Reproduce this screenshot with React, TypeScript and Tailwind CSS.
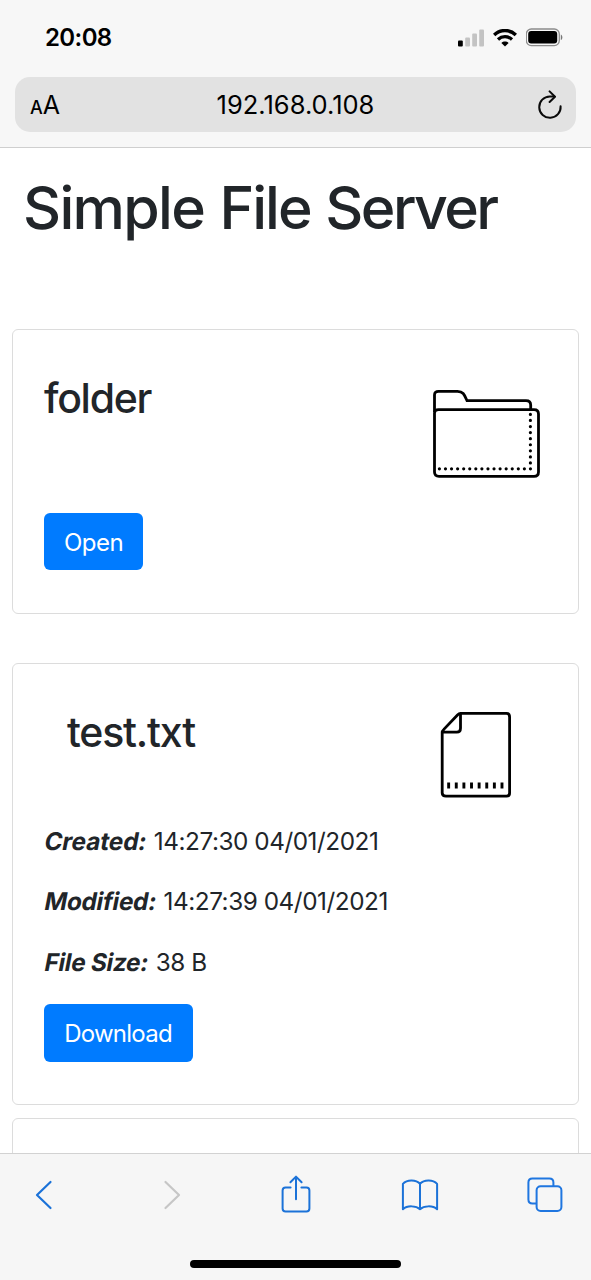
import type { ReactNode } from "react";

function SignalIcon() {
  return (
    <svg width="26" height="18" viewBox="0 0 26 18">
      <rect x="0" y="11.5" width="4.8" height="6" rx="1" fill="#000" />
      <rect x="7.2" y="8.5" width="4.8" height="9" rx="1" fill="#c3c3c3" />
      <rect x="14.2" y="4.5" width="4.8" height="13" rx="1" fill="#c3c3c3" />
      <rect x="21.2" y="0.5" width="4.8" height="17" rx="1" fill="#c3c3c3" />
    </svg>
  );
}

function WifiIcon() {
  return (
    <svg width="24" height="18" viewBox="0 0 24 18" fill="none" stroke="#000">
      <path d="M1.1 6C7.2 .1 16.8 .1 22.9 6" strokeWidth="3.5" />
      <path d="M5 10.4C9 6.8 15 6.8 19 10.4" strokeWidth="3.3" />
      <path d="M12 17.6L8.4 13.9C10.4 12.1 13.6 12.1 15.6 13.9Z" fill="#000" stroke="none" />
    </svg>
  );
}

function BatteryIcon() {
  return (
    <svg width="38" height="19" viewBox="0 0 38 19">
      <rect x="0.3" y="1" width="33" height="16.6" rx="5" fill="none" stroke="#8c8c8c" strokeWidth="1.3" />
      <rect x="2.2" y="3" width="29" height="12.6" rx="3" fill="#000" />
      <path d="M34.8 6.5C36.9 7.4 36.9 11.2 34.8 12.1Z" fill="#777" />
    </svg>
  );
}

function ReloadIcon() {
  return (
    <svg width="25" height="30" viewBox="0 0 25 30" fill="none" stroke="#0a0a0a" strokeWidth="2" strokeLinecap="round" strokeLinejoin="round">
      <path d="M22.6 16.3A10.7 10.7 0 1 1 11.9 6.4H16.4" />
      <path d="M11.6 1.4L17 6.7L11.6 12" />
    </svg>
  );
}

function FolderIcon() {
  return (
    <svg width="108" height="90" viewBox="0 0 108 90" fill="none" stroke="#000" strokeWidth="2.8" strokeLinejoin="round">
      <path d="M2.5 23V6Q2.5 2.3 6.5 2.3H25.5C31.5 2.3 32.5 6 35 11.7H94Q98.7 11.7 98.7 16V20.5" />
      <path d="M2.5 24Q2.5 20.6 6.5 20.6H102Q106.5 20.6 106.5 25V83Q106.5 87.4 102 87.4H7Q2.5 87.4 2.5 83Z" />
      <path d="M7.4 79.8H99" strokeWidth="3.2" strokeDasharray="0 6.07" strokeLinecap="round" />
      <path d="M98.4 25.4V75" strokeWidth="3.2" strokeDasharray="0 6.07" strokeLinecap="round" />
    </svg>
  );
}

function FileIcon() {
  return (
    <svg width="72" height="88" viewBox="0 0 72 88" fill="none" stroke="#000" strokeWidth="2.8" strokeLinejoin="round">
      <path d="M20.5 2.4H66.5Q69.6 2.4 69.6 6V82Q69.6 85.2 66.5 85.2H6Q2.2 85.2 2.2 82V21.5Q2.2 20 3.8 18.4L17.5 4Q19 2.4 20.5 2.4Z" />
      <path d="M20.5 2.6V17.3Q20.5 21.2 16.8 21.2H2.4" />
      <path d="M7.2 74.5H64" strokeWidth="6" strokeDasharray="2.9 4.72" />
    </svg>
  );
}

function ShareIcon() {
  return (
    <svg width="30" height="40" viewBox="0 0 30 40" fill="none" stroke="#1b72d8" strokeWidth="2" strokeLinecap="round" strokeLinejoin="round">
      <path d="M9.6 12.4H4.6Q1.6 12.4 1.6 15.4V33.5Q1.6 36.5 4.6 36.5H25.4Q28.4 36.5 28.4 33.5V15.4Q28.4 12.4 25.4 12.4H20.4" />
      <path d="M15 24.2V1.7M9.4 7.2L15 1.6L20.6 7.2" />
    </svg>
  );
}

function BookIcon() {
  return (
    <svg width="38" height="34" viewBox="0 0 38 34" fill="none" stroke="#1b72d8" strokeWidth="2" strokeLinecap="round" strokeLinejoin="round">
      <path d="M19 4.9C15.2 .7 6.2 .2 1.9 4.9V30.3C6.2 26.2 15.2 26.6 19 30.3C22.8 26.6 31.8 26.2 36.1 30.3V4.9C31.8 .2 22.8 .7 19 4.9ZM19 4.9V30.3" />
    </svg>
  );
}

function TabsIcon() {
  return (
    <svg width="36" height="36" viewBox="0 0 36 36" fill="none" stroke="#1f76e0" strokeWidth="2">
      <path d="M9.6 26.4H5.4Q1.4 26.4 1.4 22.4V5.6Q1.4 1.6 5.4 1.6H22.4Q26.4 1.6 26.4 5.6V9" />
      <rect x="9.6" y="9.2" width="24.8" height="24.8" rx="4" />
    </svg>
  );
}

function Card({ className, children }: { className: string; children?: ReactNode }) {
  return (
    <section className={`mx-3 flex shrink-0 flex-col items-start rounded-[6px] border-[1.5px] border-[#dcdcdc] bg-white pl-[31px] ${className}`}>
      {children}
    </section>
  );
}

function ActionButton({ label, className }: { label: string; className: string }) {
  return (
    <button className={`flex shrink-0 items-center justify-center rounded-[6px] bg-[#007bff] text-[24px] text-white ${className}`}>
      {label}
    </button>
  );
}

function Detail({ label, value, className }: { label: string; value: string; className: string }) {
  return (
    <p className="h-[60.6px] pt-[0.6px] whitespace-nowrap text-[24.3px] leading-[36px]">
      <span className={`ml-px inline-block -skew-x-[11deg] font-bold ${className}`}>{label}</span>
      <span className="ml-[7px] tracking-[-0.45px]">{value}</span>
    </p>
  );
}

export default function App() {
  return (
    <div className="flex h-[1280px] w-[591px] flex-col overflow-hidden bg-white font-['Inter','Liberation_Sans',sans-serif] text-[#212529]">
      <header className="flex h-[148px] shrink-0 flex-col border-b border-[#cfcfcf] bg-[#f7f7f7] text-black">
        <div className="flex h-[77px] shrink-0 items-start pt-[21px] pl-[45px]">
          <time className="w-[100px] text-[24px] leading-[34px] font-semibold tracking-[-0.6px]">20:08</time>
          <div className="ml-auto flex items-center gap-[9px] pt-[7px] pr-[27px]">
            <SignalIcon />
            <WifiIcon />
            <BatteryIcon />
          </div>
        </div>
        <div className="mx-[15px] flex h-[54.5px] shrink-0 items-center justify-between rounded-[15px] bg-[#e2e2e2] pr-[13px] pl-[15px]">
          <div className="flex w-[40px] items-baseline pt-[3px]">
            <span className="text-[18px] font-medium">A</span>
            <span className="text-[25px]">A</span>
          </div>
          <span className="pt-[2px] pr-[2px] text-[25.5px]">192.168.0.108</span>
          <div className="flex w-[40px] justify-end pt-px"><ReloadIcon /></div>
        </div>
      </header>

      <main className="flex min-h-0 flex-1 flex-col overflow-hidden">
        <h1 className="mt-[25px] mb-[86px] ml-[23px] h-[70px] shrink-0 text-[59px] leading-[70px] font-medium tracking-[-2px] whitespace-nowrap">
          <span className="tracking-[-1.7px]">Simple</span>{" "}
          <span className="ml-[1.5px]">File</span>{" "}
          <span className="ml-px tracking-[-2.6px]">Server</span>
        </h1>

        <Card className="h-[285px]">
          <div className="flex h-[182.5px] w-full shrink-0 items-start justify-between pr-[38px]">
            <h2 className="mt-[42px] text-[41px] leading-[52px] font-medium tracking-[-1.3px]">folder</h2>
            <div className="mt-[59px]"><FolderIcon /></div>
          </div>
          <ActionButton label="Open" className="h-[57.5px] w-[99px] pt-[3px] tracking-[-0.5px]" />
        </Card>

        <Card className="mt-[49px] h-[442px]">
          <div className="flex h-[158px] w-full shrink-0 items-start justify-between pr-[66px] pl-[23px]">
            <h2 className="mt-[42px] text-[41px] leading-[52px] font-medium tracking-[-1.2px]">test.txt</h2>
            <div className="mt-[47px]"><FileIcon /></div>
          </div>
          <Detail label="Created:" value="14:27:30 04/01/2021" className="tracking-[-0.1px]" />
          <Detail label="Modified:" value="14:27:39 04/01/2021" className="tracking-[-0.25px]" />
          <Detail label="File Size:" value="38 B" className="tracking-[-0.25px]" />
          <ActionButton label="Download" className="h-[58px] w-[149px] pt-[2px] pr-px tracking-[-0.75px]" />
        </Card>

        <Card className="mt-[13px] h-[285px]" />
      </main>

      <footer className="flex h-[127px] shrink-0 flex-col items-center border-t border-[#d2d2d2] bg-[#f6f6f6]">
        <nav className="flex h-[106px] w-full shrink-0 items-start pt-[20px] pl-[35px]">
          <svg className="mt-[6px]" width="18" height="30" viewBox="0 0 18 30" fill="none" stroke="#1b72d8" strokeWidth="2.2" strokeLinecap="round" strokeLinejoin="round">
            <path d="M15.5 2L2 15L15.5 28" />
          </svg>
          <svg className="mt-[6px] ml-[110px]" width="18" height="30" viewBox="0 0 18 30" fill="none" stroke="#c6c6c6" strokeWidth="2.2" strokeLinecap="round" strokeLinejoin="round">
            <path d="M2.5 2L16 15L2.5 28" />
          </svg>
          <div className="mt-px ml-[99.5px]"><ShareIcon /></div>
          <div className="mt-[5px] ml-[90.5px]"><BookIcon /></div>
          <div className="mt-[3px] ml-[88px]"><TabsIcon /></div>
        </nav>
        <div className="h-[8px] w-[211px] shrink-0 rounded-full bg-black" />
      </footer>
    </div>
  );
}
